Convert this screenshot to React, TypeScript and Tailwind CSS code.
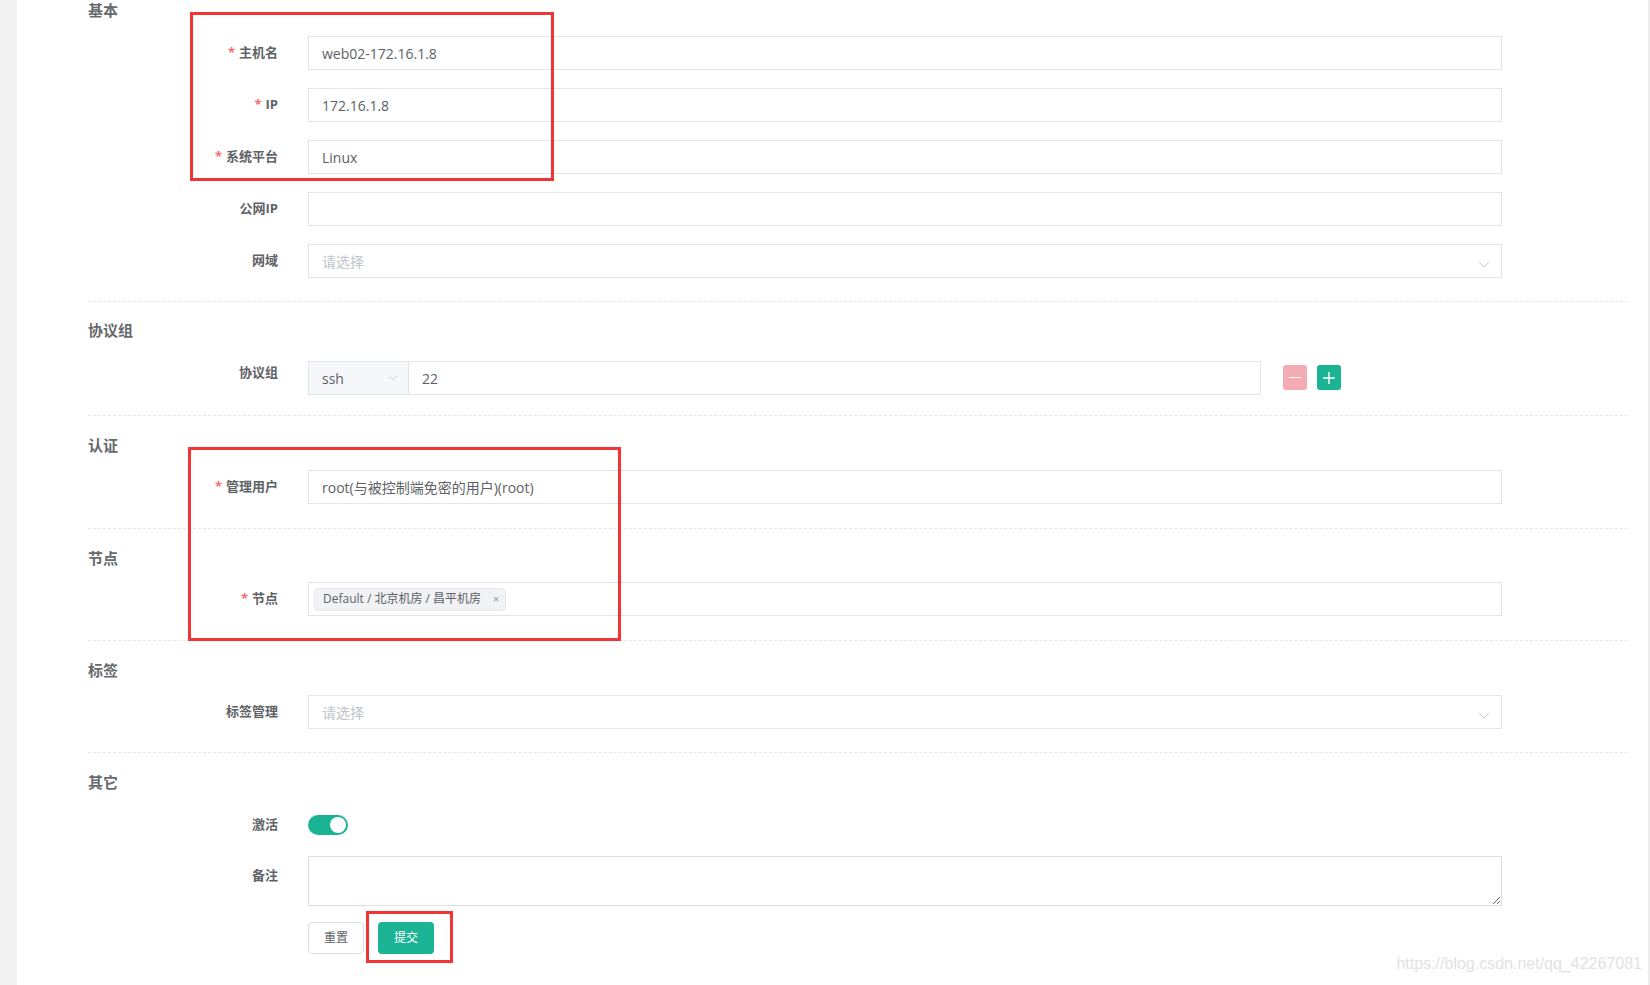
import React from "react";

const Chevron = ({ className }: { className?: string }) => (
  <svg viewBox="0 0 14 8" className={className} fill="none" stroke="currentColor" strokeWidth="1.1">
    <path d="M1 1l6 6 6-6" />
  </svg>
);

function FieldLabel({ text, required }: { text: string; required?: boolean }) {
  return (
    <div className="w-[220px] shrink-0 pr-[30px] text-right text-[13px] font-bold text-[#5f6266]">
      {required && <span className="mr-[4px] text-[#f56c6c]">*</span>}
      {text}
    </div>
  );
}

function TextRow({ label, value, required, placeholder, select }: { label: string; value?: string; required?: boolean; placeholder?: string; select?: boolean }) {
  return (
    <div className="flex h-[34px] items-center">
      <FieldLabel text={label} required={required} />
      <div className="flex h-[34px] w-[1194px] items-center justify-between border border-[#e3e4e6] bg-white pl-[13px] pr-[11px] text-[14px]">
        {value ? <span className="text-[#5e6166]">{value}</span> : <span className="text-[#c0c4cc]">{placeholder ?? ""}</span>}
        {select && <Chevron className="mt-[7px] h-[7px] w-[12px] text-[#c0c4cc]" />}
      </div>
    </div>
  );
}

function SectionTitle({ text }: { text: string }) {
  return <div className="h-5 text-[15px] font-bold leading-5 text-[#676a6c]">{text}</div>;
}

function Divider({ className }: { className?: string }) {
  return <div className={"w-[1540px] border-t border-dashed border-[#e4e6e8] " + (className ?? "")} />;
}

export default function App() {
  return (
    <div className="relative flex h-[985px] w-[1650px] overflow-hidden bg-white font-['Open_Sans','Noto_Sans_CJK_SC',sans-serif]">
      <div className="w-[17px] shrink-0 bg-[#f3f3f4]" />
      <div className="flex-1 pl-[71px]">
        {/* 基本 */}
        <SectionTitle text="基本" />
        <div className="mt-[16px] flex flex-col gap-[18px]">
          <TextRow label="主机名" value="web02-172.16.1.8" required />
          <TextRow label="IP" value="172.16.1.8" required />
          <TextRow label="系统平台" value="Linux" required />
          <TextRow label="公网IP" />
          <TextRow label="网域" placeholder="请选择" select />
        </div>
        <Divider className="mt-[23px]" />

        {/* 协议组 */}
        <div className="mt-[18px]">
          <SectionTitle text="协议组" />
        </div>
        <div className="mt-[21px] flex h-[34px] items-start">
          <div className="flex h-[24px] items-center">
            <FieldLabel text="协议组" />
          </div>
          <div className="flex h-[34px] w-[953px] border border-[#e3e4e6]">
            <div className="flex w-[100px] items-center justify-between border-r border-[#e3e4e6] bg-[#f5f7fa] pl-[13px] pr-[10px] text-[14px] text-[#5e6166]">
              <span>ssh</span>
              <Chevron className="h-[6px] w-[10px] text-[#c0c4cc]" />
            </div>
            <div className="flex flex-1 items-center px-[13px] text-[14px] text-[#5e6166]">22</div>
          </div>
          <div className="ml-[22px] mt-[4px] flex h-[25px] w-[24px] items-center justify-center rounded-[3px] bg-[#f5abb2]">
            <div className="h-[1.5px] w-[12px] bg-white" />
          </div>
          <div className="ml-[10px] mt-[4px] flex h-[25px] w-[24px] items-center justify-center rounded-[3px] bg-[#1ab394]">
            <svg viewBox="0 0 12 12" className="h-[12px] w-[12px]" stroke="white" strokeWidth="1.4">
              <path d="M6 0v12M0 6h12" />
            </svg>
          </div>
        </div>
        <Divider className="mt-[20px]" />

        {/* 认证 */}
        <div className="mt-[19px]">
          <SectionTitle text="认证" />
        </div>
        <div className="mt-[15px]">
          <TextRow label="管理用户" value="root(与被控制端免密的用户)(root)" required />
        </div>
        <Divider className="mt-[24px]" />

        {/* 节点 */}
        <div className="mt-[19px]">
          <SectionTitle text="节点" />
        </div>
        <div className="mt-[14px] flex h-[34px] items-center">
          <FieldLabel text="节点" required />
          <div className="flex h-[34px] w-[1194px] items-center border border-[#e3e4e6] px-[5px]">
            <div className="flex h-[23px] items-center rounded-[4px] border border-[#e9e9eb] bg-[#f0f2f5] pl-[8px] pr-[6px] text-[12px] text-[#5e6166]">
              <span>Default / 北京机房 / 昌平机房</span>
              <span className="ml-[12px] text-[11px] text-[#909399]">×</span>
            </div>
          </div>
        </div>
        <Divider className="mt-[24px]" />

        {/* 标签 */}
        <div className="mt-[19px]">
          <SectionTitle text="标签" />
        </div>
        <div className="mt-[15px]">
          <TextRow label="标签管理" placeholder="请选择" select />
        </div>
        <Divider className="mt-[23px]" />

        {/* 其它 */}
        <div className="mt-[19px]">
          <SectionTitle text="其它" />
        </div>
        <div className="mt-[23px] flex h-[20px] items-center">
          <FieldLabel text="激活" />
          <div className="flex h-[20px] w-[40px] items-center justify-end rounded-full bg-[#1ab394] pr-[2px]">
            <div className="h-[16px] w-[16px] rounded-full bg-white" />
          </div>
        </div>
        <div className="mt-[21px] flex items-start">
          <div className="flex h-[40px] items-center">
            <FieldLabel text="备注" />
          </div>
          <textarea className="h-[50px] w-[1194px] border border-[#dcdfe6] px-[13px] py-[6px] text-[14px] text-[#606266] outline-none" />
        </div>
        <div className="mt-[16px] flex pl-[220px]">
          <button className="h-[32px] w-[56px] rounded-[4px] border border-[#dcdfe6] bg-white text-[12px] text-[#606266]">重置</button>
          <button className="ml-[14px] h-[32px] w-[56px] rounded-[4px] bg-[#1ab394] text-[12px] text-white">提交</button>
        </div>
      </div>
      <div className="w-[2px] shrink-0 bg-[#ececec]" />

      {/* annotation boxes */}
      <div className="absolute left-[190px] top-[12px] h-[169px] w-[364px] border-[3px] border-[#f23434]" />
      <div className="absolute left-[188px] top-[447px] h-[194px] w-[433px] border-[3px] border-[#f23434]" />
      <div className="absolute left-[366px] top-[911px] h-[52px] w-[87px] border-[3px] border-[#f23434]" />

      <div className="absolute bottom-[9px] right-[8px] font-['Liberation_Sans',sans-serif] text-[16px] text-[#e2e2e2]">
        https://blog.csdn.net/qq_42267081
      </div>
    </div>
  );
}
